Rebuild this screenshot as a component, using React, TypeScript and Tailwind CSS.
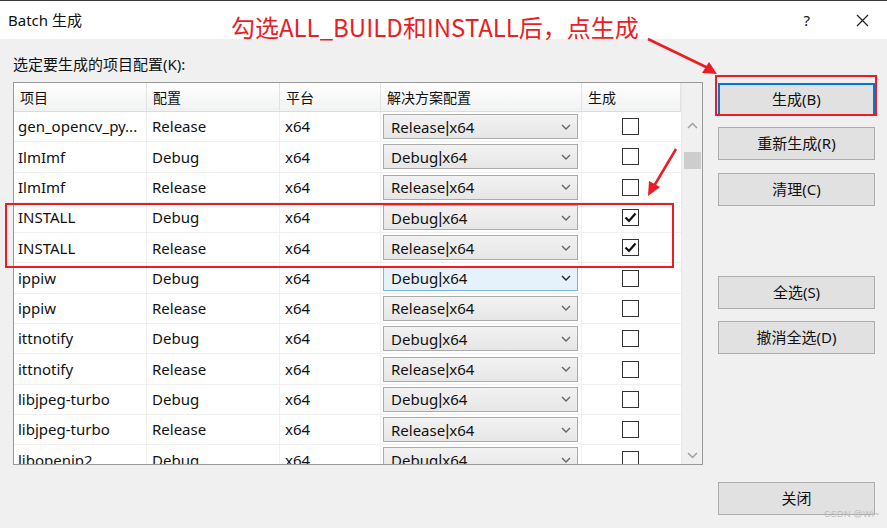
import React from "react";

const rows: { name: string; cfg: string; checked?: boolean; hl?: boolean }[] = [
  { name: "gen_opencv_py...", cfg: "Release" },
  { name: "IlmImf", cfg: "Debug" },
  { name: "IlmImf", cfg: "Release" },
  { name: "INSTALL", cfg: "Debug", checked: true },
  { name: "INSTALL", cfg: "Release", checked: true },
  { name: "ippiw", cfg: "Debug", hl: true },
  { name: "ippiw", cfg: "Release" },
  { name: "ittnotify", cfg: "Debug" },
  { name: "ittnotify", cfg: "Release" },
  { name: "libjpeg-turbo", cfg: "Debug" },
  { name: "libjpeg-turbo", cfg: "Release" },
  { name: "libopenjp2", cfg: "Debug" },
];

const font = { fontFamily: '"Noto Sans", "Noto Sans CJK SC", sans-serif' };

function Chevron({ dark }: { dark?: boolean }) {
  return (
    <svg width="10" height="6" viewBox="0 0 10 6" className="shrink-0">
      <polyline points="1,1 5,5 9,1" fill="none" stroke={dark ? "#222" : "#666"} strokeWidth="1.4" />
    </svg>
  );
}

function Btn({ label, active }: { label: string; active?: boolean }) {
  return (
    <div
      className={
        "h-[33px] w-[157px] flex items-center justify-center text-[15px] text-[#111] bg-[#e1e1e1] " +
        (active ? "border-2 border-[#0078d7]" : "border border-[#adadad]")
      }
    >
      {label}
    </div>
  );
}

export default function App() {
  return (
    <div className="w-[887px] h-[528px] bg-[#f0f0f0] relative overflow-hidden" style={font}>
      {/* title bar */}
      <div className="h-[39px] bg-white border-t border-[#3a3a3a] flex items-center pl-[8px] pr-[18px] text-[15px] text-[#111]">
        <span>Batch 生成</span>
        <span className="ml-auto mr-[46px] text-[15px]">?</span>
        <svg width="13" height="13" viewBox="0 0 13 13">
          <path d="M1 1 L12 12 M12 1 L1 12" stroke="#222" strokeWidth="1.2" />
        </svg>
      </div>

      <div className="pl-[13px] pt-[15px] text-[15px] text-[#111] leading-[21px]">选定要生成的项目配置(K):</div>

      <div className="flex pl-[13px] pt-[7px] gap-[15px]">
        {/* table */}
        <div className="w-[690px] h-[383px] border border-[#9a9a9a] bg-white flex overflow-hidden">
          <div className="w-[667px] flex flex-col">
            <div className="h-[29px] shrink-0 flex text-[14px] text-[#111] bg-gradient-to-b from-white to-[#f1f2f3] border-b border-[#dcdcdc]">
              {[
                ["项目", "w-[133px]"],
                ["配置", "w-[133px]"],
                ["平台", "w-[101px]"],
                ["解决方案配置", "w-[201px]"],
                ["生成", "w-[99px]"],
              ].map(([t, w], i) => (
                <div key={i} className={w + " flex items-center pl-[6px] border-r border-[#e3e3e3]"}>
                  {t}
                </div>
              ))}
            </div>
            {rows.map((r, i) => (
              <div key={i} className="h-[30.3px] shrink-0 flex text-[15px] text-[#111] border-b border-[#f0f0f0]">
                <div className="w-[133px] flex items-center pl-[4px] border-r border-[#f0f0f0]">{r.name}</div>
                <div className="w-[133px] flex items-center pl-[5px] border-r border-[#f0f0f0]">{r.cfg}</div>
                <div className="w-[101px] flex items-center pl-[5px] border-r border-[#f0f0f0]">x64</div>
                <div className="w-[201px] flex items-center pl-[2px] border-r border-[#f0f0f0]">
                  <div
                    className={
                      "w-[195px] h-[25px] flex items-center pl-[7px] pr-[6px] border " +
                      (r.hl
                        ? "bg-[#e5f1fb] border-[#7eb4ea]"
                        : "bg-gradient-to-b from-[#f2f2f2] to-[#e6e6e6] border-[#acacac]")
                    }
                  >
                    <span className="flex-1 pt-[2px]">
                      {r.cfg}
                      <span className="text-[16px]" style={{ fontFamily: '"Liberation Sans", sans-serif' }}>|</span>
                      x64
                    </span>
                    <Chevron dark={r.hl} />
                  </div>
                </div>
                <div className="w-[99px] flex items-center justify-center">
                  <div className="w-[17px] h-[17px] border border-[#333] bg-white flex items-center justify-center ml-[-2px]">
                    {r.checked && (
                      <svg width="13" height="11" viewBox="0 0 13 11">
                        <polyline points="1.5,5.5 5,9 11.5,1.5" fill="none" stroke="#111" strokeWidth="2.2" />
                      </svg>
                    )}
                  </div>
                </div>
              </div>
            ))}
          </div>
          {/* scrollbar */}
          <div className="w-[21px] bg-[#f0f0f0] flex flex-col items-center border-l border-[#e8e8e8]">
            <div className="h-[52px] w-full flex items-end justify-center pb-[6px]">
              <svg width="11" height="7" viewBox="0 0 11 7">
                <polyline points="1,6 5.5,1.5 10,6" fill="none" stroke="#a0a0a0" strokeWidth="1.5" />
              </svg>
            </div>
            <div className="mt-[17px] w-[17px] h-[17px] bg-[#cdcdcd]" />
            <div className="mt-auto mb-[5px]">
              <svg width="11" height="7" viewBox="0 0 11 7">
                <polyline points="1,1 5.5,5.5 10,1" fill="none" stroke="#a0a0a0" strokeWidth="1.5" />
              </svg>
            </div>
          </div>
        </div>

        {/* buttons */}
        <div className="flex flex-col pt-[1px]">
          <Btn label="生成(B)" active />
          <div className="h-[11px]" />
          <Btn label="重新生成(R)" />
          <div className="h-[13px]" />
          <Btn label="清理(C)" />
          <div className="h-[70px]" />
          <Btn label="全选(S)" />
          <div className="h-[12px]" />
          <Btn label="撤消全选(D)" />
          <div className="h-[128px]" />
          <Btn label="关闭" />
        </div>
      </div>

      {/* annotations */}
      <div
        className="absolute left-[231px] top-[11px] text-[24px] leading-[32px] text-[#ec1c24] whitespace-nowrap"
        style={{ fontFamily: '"Noto Sans CJK SC", sans-serif' }}
      >
        勾选ALL_BUILD和INSTALL后，点生成
      </div>
      <div className="absolute left-[715px] top-[75px] w-[162px] h-[41px] border-2 border-[#ec1c24]" />
      <div className="absolute left-[5px] top-[203px] w-[669px] h-[65px] border-2 border-[#ec1c24]" />
      <svg className="absolute left-0 top-0" width="887" height="528">
        <line x1="648" y1="39" x2="708" y2="68" stroke="#ec1c24" strokeWidth="2.5" />
        <polygon points="717,74 702,73 709,62" fill="#ec1c24" />
        <line x1="676" y1="149" x2="654" y2="186" stroke="#ec1c24" strokeWidth="2.5" />
        <polygon points="648,196 649,181 660,187" fill="#ec1c24" />
      </svg>
      <div className="absolute left-[824px] top-[508px] text-[9px] text-[#bbb] tracking-[0.3px]" style={{ fontFamily: '"Liberation Sans", sans-serif' }}>
        CSDN @Wi~
      </div>
    </div>
  );
}
